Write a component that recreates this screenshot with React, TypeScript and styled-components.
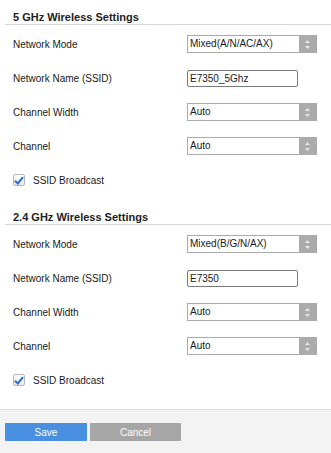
import React from 'react';
import styled, { createGlobalStyle } from 'styled-components';

const GlobalStyle = createGlobalStyle`
  html, body {
    margin: 0;
    padding: 0;
    background: #fff;
    font-family: "Liberation Sans", Arial, sans-serif;
  }
`;

const Page = styled.div`
  width: 331px;
  height: 453px;
  display: flex;
  flex-direction: column;
  background: #fff;
  color: #1a1a1a;
  font-size: 10px;
`;

const Section = styled.section`
  display: flex;
  flex-direction: column;
  padding-bottom: 3px;
`;

const Heading = styled.h2`
  margin: 0 0 0 5px;
  padding: 10px 0 0 8px;
  height: 14px;
  line-height: 14px;
  font-size: 11px;
  font-weight: bold;
  color: #222;
  border-bottom: 1px solid #d4d4d4;
`;

const Rows = styled.div`
  display: flex;
  flex-direction: column;
  padding-top: 2px;
`;

const Row = styled.div`
  height: 34px;
  display: grid;
  grid-template-columns: 174px 1fr;
  align-items: center;
  padding-left: 13px;
`;

const Label = styled.span`
  font-size: 10px;
`;

const SelectBox = styled.div`
  width: 130px;
  height: 18px;
  box-sizing: border-box;
  border: 1px solid #ababab;
  display: flex;
  align-items: stretch;
  background: #fff;
`;

const SelectValue = styled.span`
  flex: 1;
  padding-left: 2px;
  line-height: 16px;
  font-size: 10px;
`;

const Spinner = styled.span`
  width: 17px;
  background: #ababab;
  display: flex;
  align-items: center;
  justify-content: center;
`;

const TextBox = styled.div`
  width: 111px;
  height: 17px;
  box-sizing: border-box;
  border: 1px solid #7a7a7a;
  border-radius: 2px;
  padding-left: 2px;
  line-height: 15px;
  font-size: 10px;
`;

const CheckRow = styled.label`
  height: 34px;
  display: flex;
  align-items: center;
  gap: 8px;
  padding-left: 13px;
  font-size: 10px;
`;

const Check = styled.span`
  width: 12px;
  height: 12px;
  box-sizing: border-box;
  border: 1px solid #b5b5b5;
  border-radius: 2px;
  background: linear-gradient(#fdfdfd, #e6e6e6);
  display: flex;
  align-items: center;
  justify-content: center;
`;

const Footer = styled.footer`
  margin-top: 9px;
  flex: 1;
  background: #f3f3f3;
  border-top: 1px solid #e2e2e2;
  display: flex;
  align-items: flex-start;
  gap: 3px;
  padding: 13px 0 0 5px;
`;

const Button = styled.button<{ $primary?: boolean }>`
  width: ${p => (p.$primary ? '82px' : '91px')};
  height: 18px;
  border: none;
  padding: 0;
  background: ${p => (p.$primary ? '#4a90e2' : '#a6a6a6')};
  color: #fff;
  font-family: "Liberation Sans", Arial, sans-serif;
  font-size: 10px;
`;

const Arrows = () => (
  <svg width="7" height="11" viewBox="0 0 7 11">
    <path d="M3.5 1 L6 4 L1 4 Z" fill="#e8e8e8" />
    <path d="M1 7 L6 7 L3.5 10 Z" fill="#e8e8e8" />
  </svg>
);

const Select = ({ value }: { value: string }) => (
  <SelectBox>
    <SelectValue>{value}</SelectValue>
    <Spinner>
      <Arrows />
    </Spinner>
  </SelectBox>
);

const Wireless = ({ title, mode, ssid }: { title: string; mode: string; ssid: string }) => (
  <Section>
    <Heading>{title}</Heading>
    <Rows>
      <Row>
        <Label>Network Mode</Label>
        <Select value={mode} />
      </Row>
      <Row>
        <Label>Network Name (SSID)</Label>
        <TextBox>{ssid}</TextBox>
      </Row>
      <Row>
        <Label>Channel Width</Label>
        <Select value="Auto" />
      </Row>
      <Row>
        <Label>Channel</Label>
        <Select value="Auto" />
      </Row>
      <CheckRow>
        <Check>
          <svg width="10" height="9" viewBox="0 0 10 9">
            <path d="M1 4.8 L3.8 7.5 L9 1.2" fill="none" stroke="#2a6fd6" strokeWidth="2" />
          </svg>
        </Check>
        SSID Broadcast
      </CheckRow>
    </Rows>
  </Section>
);

export default function App() {
  return (
    <>
      <GlobalStyle />
      <Page>
        <Wireless title="5 GHz Wireless Settings" mode="Mixed(A/N/AC/AX)" ssid="E7350_5Ghz" />
        <Wireless title="2.4 GHz Wireless Settings" mode="Mixed(B/G/N/AX)" ssid="E7350" />
        <Footer>
          <Button $primary>Save</Button>
          <Button>Cancel</Button>
        </Footer>
      </Page>
    </>
  );
}
